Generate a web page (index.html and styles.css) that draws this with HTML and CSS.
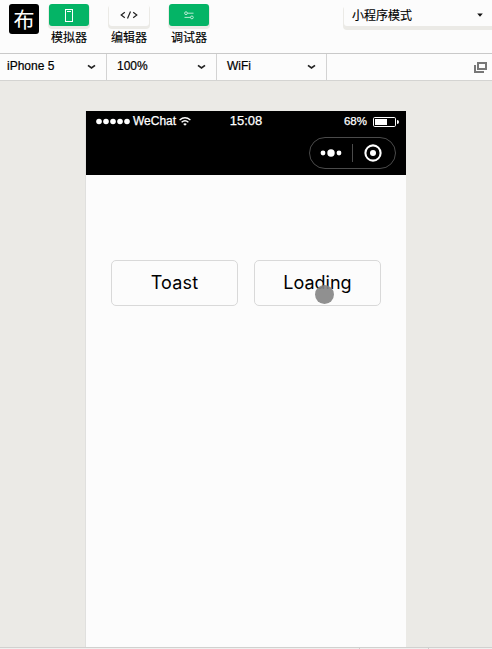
FILE: index.html
```html
<!DOCTYPE html>
<html lang="zh-CN">
<head>
<meta charset="utf-8">
<title>小程序模拟器</title>
<link rel="stylesheet" href="styles.css">
</head>
<body>
<div class="app">
  <header class="toolbar">
    <div class="avatar">布</div>
    <div class="tool">
      <div class="tool-btn on"><svg width="8" height="13" viewBox="0 0 8 13"><rect x=".5" y=".5" width="7" height="12" fill="none" stroke="#fff"/><path d="M2 2.5h4" stroke="#fff"/></svg></div>
      <span>模拟器</span>
    </div>
    <div class="tool">
      <div class="tool-btn"><svg width="18" height="8" viewBox="0 0 18 8" fill="none" stroke="#222" stroke-width="1.2"><path d="M4.8 1.2 1.2 4l3.6 2.8M13.2 1.2 16.8 4l-3.6 2.8M10.5.5l-3 7"/></svg></div>
      <span>编辑器</span>
    </div>
    <div class="tool">
      <div class="tool-btn on"><svg width="10" height="9" viewBox="0 0 10 9" fill="none" stroke="#c9f1df" stroke-width=".9"><circle cx="2" cy="2.2" r="1.4"/><path d="M3.4 2.2H9.5M.5 6.4h6"/><circle cx="7.9" cy="6.4" r="1.4"/></svg></div>
      <span>调试器</span>
    </div>
    <div class="mode"><span>小程序模式</span><svg width="6" height="4" viewBox="0 0 6 4"><path d="M.2.4h5.6L3 3.8z" fill="#111"/></svg></div>
  </header>
  <nav class="options">
    <div class="option device"><span>iPhone 5</span><svg width="9" height="6" viewBox="0 0 9 6"><path d="M1 1.3 4.5 4 8 1.3" fill="none" stroke="#222" stroke-width="1.7"/></svg></div>
    <div class="option"><span>100%</span><svg width="9" height="6" viewBox="0 0 9 6"><path d="M1 1.3 4.5 4 8 1.3" fill="none" stroke="#222" stroke-width="1.7"/></svg></div>
    <div class="option"><span>WiFi</span><svg width="9" height="6" viewBox="0 0 9 6"><path d="M1 1.3 4.5 4 8 1.3" fill="none" stroke="#222" stroke-width="1.7"/></svg></div>
    <svg class="detach" width="13" height="11" viewBox="0 0 13 11" fill="none" stroke="#777" stroke-width="2"><path d="M4 1h8v6H4zM1 3v7h9"/></svg>
  </nav>
  <main class="stage">
    <section class="phone">
      <div class="phone-head">
        <div class="status">
          <div class="carrier">
            <svg class="signal" width="35" height="7" viewBox="0 0 35 7" fill="#fff"><circle cx="3" cy="3.5" r="2.8"/><circle cx="10" cy="3.5" r="2.8"/><circle cx="17" cy="3.5" r="2.8"/><circle cx="24" cy="3.5" r="2.8"/><circle cx="31" cy="3.5" r="2.8"/></svg>
            <span>WeChat</span>
            <svg class="wifi" width="12" height="9" viewBox="0 0 12 9" fill="none" stroke="#fff" stroke-width="1.4"><path d="M.6 3Q6-1.4 11.4 3M2.6 5.2Q6 2.3 9.4 5.2"/><path d="M6 8.8 4.2 6.9Q6 5.4 7.8 6.9z" fill="#fff" stroke="none"/></svg>
          </div>
          <div class="time">15:08</div>
          <div class="power"><span>68%</span><svg width="27" height="10" viewBox="0 0 27 10"><rect x=".5" y=".5" width="22" height="9" rx="1.2" fill="none" stroke="#fff"/><path d="M2 2h12v6H2zM24 3q2 0 2 2t-2 2z" fill="#fff"/></svg></div>
        </div>
        <div class="capsule">
          <svg width="22" height="8" viewBox="0 0 22 8" fill="#fff"><circle cx="3" cy="4" r="2.4"/><circle cx="11" cy="4" r="3.7"/><circle cx="19" cy="4" r="2.4"/></svg>
          <i></i>
          <svg width="18" height="18" viewBox="0 0 18 18"><circle cx="9" cy="9" r="7.6" fill="none" stroke="#fff" stroke-width="2.1"/><circle cx="9" cy="9" r="3" fill="#fff"/></svg>
        </div>
      </div>
      <div class="buttons">
        <div class="btn toast">Toast</div>
        <div class="btn loading">Loading<b class="pointer"></b></div>
      </div>
    </section>
  </main>
  <footer class="bottom"><i></i><i></i></footer>
</div>
</body>
</html>
```
FILE: styles.css
```css
* { box-sizing: border-box; }
body { margin: 0; background: #ebeae6; color: #000; font: 12px/16px "Liberation Sans", "Noto Sans CJK SC", sans-serif; }
svg { display: block; flex: none; }
.app { width: 492px; height: 649px; overflow: hidden; display: flex; flex-direction: column; }
.toolbar { height: 53px; flex: none; display: flex; align-items: flex-start; background: #fcfcfc; padding-left: 9px; }
.avatar { width: 30px; height: 30px; margin: 4px 0 0; border-radius: 3px; background: #000; color: #fff; font: 21px/29px "Noto Sans CJK SC", sans-serif; text-align: center; }
.tool { width: 60px; padding-top: 4px; display: flex; flex-direction: column; align-items: center; }
.tool-btn { width: 40px; height: 22px; border-radius: 3px; display: flex; align-items: center; justify-content: center; background: #fcfcfc; box-shadow: 0 2px 0 1px #ebeae6; }
.tool-btn.on { background: #04b466; }
.tool span { margin-top: 4px; line-height: 17px; white-space: nowrap; -webkit-text-stroke: .15px #000; }
.mode { margin-left: auto; width: 148px; height: 22px; margin-top: 4px; padding: 0 9px 0 8px; border-radius: 3px 0 0 3px; display: flex; align-items: center; justify-content: space-between; background: #fcfcfc; box-shadow: 0 3px 0 1px #ebeae6; -webkit-text-stroke: .15px #000; }
.mode span { padding-top: 2px; }
.options { height: 28px; flex: none; display: flex; background: #fcfcfc; border-top: 1px solid #c9c9c9; border-bottom: 1px solid #d4d4d2; align-items: center; }
.option { width: 110px; height: 26px; padding: 0 10px; border-right: 1px solid #d3d3d3; display: flex; align-items: center; justify-content: space-between; line-height: 24px; -webkit-text-stroke: .2px #000; }
.option span { margin-top: -2px; }
.option.device { width: 107px; padding-left: 7px; }
.detach { margin-left: auto; margin-right: 5px; }
.stage { flex: 1; padding: 30px 86px 0 85px; display: flex; }
.phone { width: 321px; background: #fcfcfc; border-left: 1px solid #e0e0de; }
.phone-head { height: 64px; background: #000; color: #fff; }
.status { height: 20px; display: grid; grid-template-columns: 1fr 40px 1fr; align-items: center; padding: 0 6px 0 10px; }
.carrier { display: flex; align-items: center; gap: 3px; -webkit-text-stroke: .25px #fff; }
.carrier span { width: 43px; margin-left: -1px; }
.time { font-size: 13px; text-align: center; margin: 0 2px 0 -2px; -webkit-text-stroke: .25px #fff; }
.power { display: flex; align-items: center; justify-content: flex-end; gap: 6px; font-size: 11.5px; -webkit-text-stroke: .25px #fff; }
.power svg { margin-top: 2px; }
.capsule { width: 87px; height: 32px; margin: 6px 10px 0 auto; border: 1px solid #4b4b4b; border-radius: 16px; display: flex; align-items: center; padding: 0 13px 0 10px; justify-content: space-between; }
.capsule i { width: 1px; height: 18px; margin-right: 1px; background: #4b4b4b; }
.buttons { padding: 85px 25px 0; display: flex; gap: 16px; }
.btn { position: relative; width: 127px; height: 46px; border: 1px solid #d9d9d9; border-radius: 5px; font: 18px/44px Inter, "Liberation Sans", sans-serif; text-align: center; }
.toast { letter-spacing: .2px; }
.pointer { position: absolute; left: 60px; top: 24px; width: 19px; height: 19px; border-radius: 50%; background: #858585e8; }
.bottom { height: 2px; flex: none; background: #f0f0ef; border-top: 1px solid #d1d1cf; display: flex; gap: 68px; padding-left: 359px; }
.bottom i { width: 1px; height: 1px; background: #ccc; }
```
